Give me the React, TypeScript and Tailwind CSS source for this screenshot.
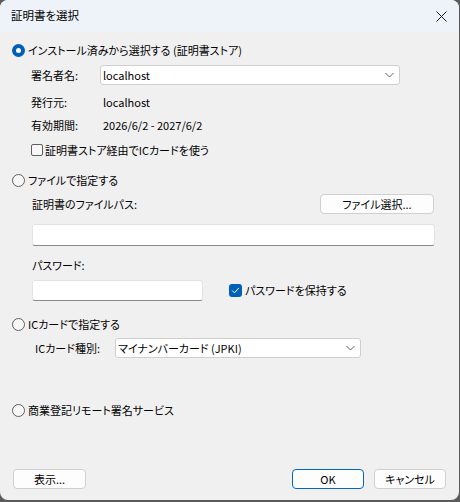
import React from "react";

const jp = "font-['Noto_Sans_CJK_JP',sans-serif] [font-feature-settings:'palt']";

function Radio({ checked }: { checked?: boolean }) {
  if (checked) {
    return (
      <span className="flex h-[13px] w-[13px] shrink-0 items-center justify-center rounded-full bg-[#005fb8]">
        <span className="h-[5px] w-[5px] rounded-full bg-white" />
      </span>
    );
  }
  return <span className="h-[13px] w-[13px] shrink-0 rounded-full border border-[#5f5f5f] bg-[#f7f7f7]" />;
}

function Check({ checked }: { checked?: boolean }) {
  if (checked) {
    return (
      <span className="flex h-[13px] w-[13px] shrink-0 items-center justify-center rounded-[3px] bg-[#005fb8]">
        <svg width="9" height="9" viewBox="0 0 9 9" fill="none">
          <path d="M1.5 4.8 L3.5 6.8 L7.6 2.2" stroke="white" strokeWidth="1" strokeLinecap="round" strokeLinejoin="round" />
        </svg>
      </span>
    );
  }
  return <span className="h-[12px] w-[12px] shrink-0 rounded-[2px] border border-[#5f5f5f] bg-[#f7f7f7]" />;
}

function Chevron() {
  return (
    <svg width="9" height="6" viewBox="0 0 9 6" fill="none">
      <path d="M0.5 1 L4.5 5 L8.5 1" stroke="#606060" strokeWidth="1" />
    </svg>
  );
}

function Combo({ value, width }: { value: string; width: string }) {
  return (
    <div className={`flex h-[20px] ${width} items-center justify-between rounded-[3px] border border-[#cfcfcf] bg-white pl-[2px] pr-[5px]`}>
      <span className="leading-none text-[#000]">{value}</span>
      <Chevron />
    </div>
  );
}

function Button({ children, primary, width }: { children: React.ReactNode; primary?: boolean; width: string }) {
  return (
    <div
      className={`flex h-[20px] ${width} items-center justify-center rounded-[4px] border bg-[#fdfdfd] text-[11px] leading-none text-black ${
        primary ? "border-[#0067c0]" : "border-[#d0d0d0]"
      }`}
    >
      {children}
    </div>
  );
}

export default function App() {
  return (
    <div className={`h-[502px] w-[460px] bg-[#5b5b5b] ${jp}`}>
      <div className="flex h-[500px] w-[459px] flex-col overflow-hidden rounded-b-[8px] rounded-t-[8px] bg-[#f0f0f0]">
        {/* title bar */}
        <div className="flex h-[32px] shrink-0 items-center justify-between bg-[#eef3f9] pl-[11px] pr-[11px]">
          <span className="text-[11.5px] leading-none text-black">証明書を選択</span>
          <svg width="11" height="11" viewBox="0 0 11 11" fill="none" className="mr-[1px]">
            <path d="M0.5 0.5 L10.5 10.5 M10.5 0.5 L0.5 10.5" stroke="#1a1a1a" strokeWidth="1" />
          </svg>
        </div>

        <div className="flex flex-col text-[11px] leading-none text-black">
          {/* installed store */}
          <div className="mt-[10px] flex h-[16px] items-center gap-[3px] pl-[12px]">
            <Radio checked />
            <span>インストール済みから選択する (証明書ストア)</span>
          </div>
          <div className="mt-[7px] flex items-center pl-[31px]">
            <span className="w-[69px]">署名者名:</span>
            <Combo value="localhost" width="w-[300px]" />
          </div>
          <div className="mt-[9px] flex h-[16px] items-center pl-[31px]">
            <span className="w-[72px]">発行元:</span>
            <span>localhost</span>
          </div>
          <div className="mt-[7px] flex h-[16px] items-center pl-[31px]">
            <span className="w-[72px]">有効期間:</span>
            <span>2026/6/2 - 2027/6/2</span>
          </div>
          <div className="mt-[9px] flex h-[16px] items-center gap-[2px] pl-[31px]">
            <Check />
            <span>証明書ストア経由でICカードを使う</span>
          </div>

          {/* file */}
          <div className="mt-[14px] flex h-[16px] items-center gap-[3px] pl-[12px]">
            <Radio />
            <span>ファイルで指定する</span>
          </div>
          <div className="mt-[6px] flex items-center justify-between pl-[32px] pr-[25px]">
            <span>証明書のファイルパス:</span>
            <Button width="w-[114px]">ファイル選択...</Button>
          </div>
          <div className="ml-[32px] mt-[10px] h-[22px] w-[403px] rounded-[3px] border border-[#e3e3e3] border-b-[#8a8a8a] bg-white" />
          <div className="mt-[11px] flex h-[16px] items-center pl-[32px]">
            <span>パスワード:</span>
          </div>
          <div className="mt-[7px] flex items-center pl-[32px]">
            <div className="h-[21px] w-[171px] rounded-[3px] border border-[#e3e3e3] border-b-[#8a8a8a] bg-white" />
            <div className="ml-[26px] flex items-center gap-[3px]">
              <Check checked />
              <span>パスワードを保持する</span>
            </div>
          </div>

          {/* IC card */}
          <div className="mt-[15px] flex h-[16px] items-center gap-[3px] pl-[12px]">
            <Radio />
            <span>ICカードで指定する</span>
          </div>
          <div className="mt-[6px] flex items-center pl-[35px]">
            <span className="w-[80px]">ICカード種別:</span>
            <Combo value="マイナンバーカード (JPKI)" width="w-[246px]" />
          </div>

          {/* remote */}
          <div className="mt-[44px] flex h-[16px] items-center gap-[3px] pl-[12px]">
            <Radio />
            <span>商業登記リモート署名サービス</span>
          </div>

          {/* buttons */}
          <div className="mt-[51px] flex items-center pl-[13px]">
            <Button width="w-[73px]">表示...</Button>
            <div className="ml-auto mr-[13px] flex gap-[10px]">
              <Button primary width="w-[72px]">OK</Button>
              <Button width="w-[72px]">キャンセル</Button>
            </div>
          </div>
        </div>
      </div>
    </div>
  );
}
